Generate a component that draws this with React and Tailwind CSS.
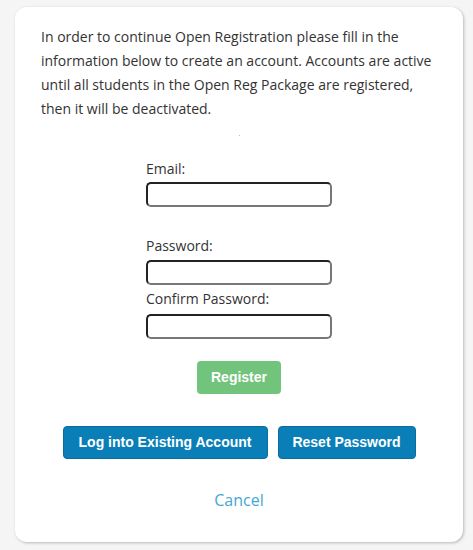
export default function App() {
    return (
        <div className="min-h-[550px] bg-[#f5f5f5] pt-[7px] pl-[15px] pr-[10px] pb-[8px]">
            <div className="w-[448px] h-[535px] bg-white rounded-[12px] shadow-[1px_1px_3px_rgba(0,0,0,0.25)] px-[26px] pt-[18px] font-['Open_Sans',sans-serif] text-[#333]">
                <p className="text-[14px] leading-[24px]">
                    In order to continue Open Registration please fill in the information below to create an account. Accounts are active until all students in the Open Reg Package are registered, then it will be deactivated.
                </p>
                <div className="flex justify-center mt-[14px]">
                    <span className="block w-[1px] h-[1px] bg-[#bbb]" />
                </div>
                <div className="w-[186px] mx-auto mt-[23px]">
                    <label className="block text-[14px] leading-[20px] mb-[3px]">Email:</label>
                    <input className="block w-[186px] h-[25px] rounded-[5px] border-2 border-t-[#222] border-l-[#222] border-b-[#777] border-r-[#777] bg-white" />
                    <label className="block text-[14px] leading-[20px] mt-[29px] mb-[4px]">Password:</label>
                    <input type="password" className="block w-[186px] h-[25px] rounded-[5px] border-2 border-t-[#222] border-l-[#222] border-b-[#777] border-r-[#777] bg-white" />
                    <label className="block text-[14px] leading-[20px] mt-[4px] mb-[5px]">Confirm Password:</label>
                    <input type="password" className="block w-[186px] h-[25px] rounded-[5px] border-2 border-t-[#222] border-l-[#222] border-b-[#777] border-r-[#777] bg-white" />
                </div>
                <div className="flex justify-center mt-[22px]">
                    <button className="w-[84px] h-[33px] rounded-[4px] bg-[#72c37b] text-white font-bold text-[14px] font-['Liberation_Sans',Arial,sans-serif]">
                        Register
                    </button>
                </div>
                <div className="flex justify-center gap-[10px] mt-[32px] font-['Liberation_Sans',Arial,sans-serif]">
                    <button className="w-[205px] h-[33px] rounded-[4px] bg-[#0a7fb7] border border-[#0a6d9e] text-white font-bold text-[14px]">
                        Log into Existing Account
                    </button>
                    <button className="w-[138px] h-[33px] rounded-[4px] bg-[#0a7fb7] border border-[#0a6d9e] text-white font-bold text-[14px]">
                        Reset Password
                    </button>
                </div>
                <div className="flex justify-center mt-[29px]">
                    <a href="#" className="text-[16px] text-[#45a7d3]">Cancel</a>
                </div>
            </div>
        </div>
    );
}
